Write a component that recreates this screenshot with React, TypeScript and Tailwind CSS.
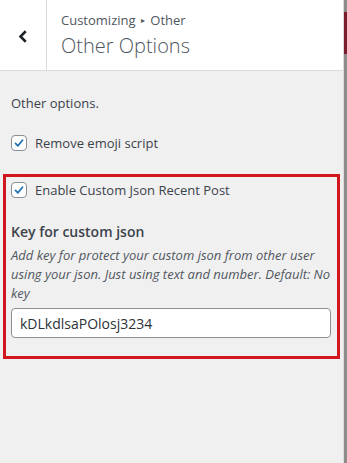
import React from "react";

const font = { fontFamily: '"Open Sans", "Noto Sans", sans-serif' };

const Checkbox = () => (
  <span className="w-[16px] h-[16px] shrink-0 rounded-[4px] border border-[#8c8f94] bg-white flex items-center justify-center">
    <svg viewBox="0 0 20 20" className="w-[16px] h-[16px]">
      <path d="M5 10.5 L8.5 14 L15 6" fill="none" stroke="#2271b1" strokeWidth="2.6" strokeLinecap="round" strokeLinejoin="round" />
    </svg>
  </span>
);

export default function App() {
  return (
    <div className="w-[347px] h-[463px] flex bg-[#f0f0f1] overflow-hidden text-[#3c434a]" style={font}>
      <div className="w-[344px] flex flex-col border-r border-[#dcdcde]">
        {/* Header */}
        <div className="h-[71px] flex bg-white border-b border-[#dcdcde]">
          <button className="w-[47px] border-r border-[#dcdcde] flex items-center justify-center">
            <svg viewBox="0 0 20 20" className="w-[15px] h-[15px] mt-[2px]">
              <path d="M13 3 L6 10 L13 17" fill="none" stroke="#1d2327" strokeWidth="3.4" />
            </svg>
          </button>
          <div className="flex flex-col pl-[14px] pt-[11px] text-[#50575e]">
            <span className="text-[13px] leading-[18px]">
              Customizing <span className="text-[8px] align-[2px] mx-[2px]">▸</span> Other
            </span>
            <span className="text-[20px] leading-[28px] font-light mt-[3px]">Other Options</span>
          </div>
        </div>

        {/* Body */}
        <div className="flex flex-col px-[11px] pt-[23px]">
          <p className="text-[13px] leading-[18px]">Other options.</p>
          <label className="flex items-center gap-[8px] mt-[22px] text-[13px] leading-[18px]">
            <Checkbox />
            <span>Remove emoji script</span>
          </label>
        </div>

        <div className="mx-[3px] mt-[22px] border-[3px] border-[#d2161e] pl-[5px] pr-[6px] pt-[4px] pb-[18px] flex flex-col">
          <label className="flex items-center gap-[8px] text-[13px] leading-[18px]">
            <Checkbox />
            <span>Enable Custom Json Recent Post</span>
          </label>
          <h3 className="mt-[23px] text-[14px] leading-[20px] font-semibold text-[#3c434a]">Key for custom json</h3>
          <p className="mt-[4px] text-[13px] leading-[19px] italic text-[#50575e]">
            Add key for protect your custom json from other user using your json. Just using text and number. Default: No key
          </p>
          <input
            readOnly
            value="kDLkdlsaPOlosj3234"
            className="mt-[5px] h-[30px] w-full rounded-[4px] border border-[#8c8f94] bg-white px-[8px] text-[14px] text-[#2c3338] outline-none"
            style={font}
          />
        </div>
      </div>
      <div className="w-[3px] flex flex-col bg-[#8c8c8c]">
        <div className="h-[12px]" />
        <div className="h-[42px] bg-[#7a1d2c]" />
      </div>
    </div>
  );
}
